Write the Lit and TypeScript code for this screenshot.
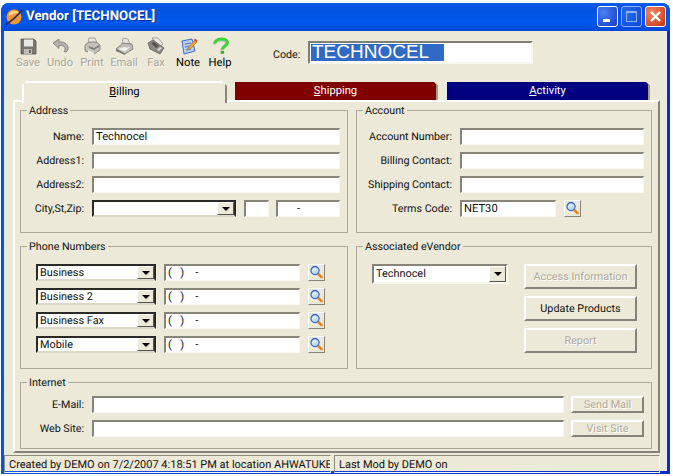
import { LitElement, html, css, svg } from "lit";
import { customElement } from "lit/decorators.js";

const icons: Record<string, unknown> = {
  Save: svg`<path d="M2 2h13l2 2v13H2z" fill="#77776f" stroke="#55554f" stroke-width=".8"/><rect x="5" y="2.500" width="9" height="7" fill="#e8e8e2"/><rect x="5" y="12" width="8" height="5" fill="#bdbdb6"/><rect x="10" y="13" width="2" height="3" fill="#66665f"/>`,
  Undo: svg`<path d="M2 6l6-4v3c5-.5 8 1.500 9 5 .5 2-.5 4-2 5l-2-.5c1.500-1.500 1.500-3.500 0-5-1.200-1-3-1.300-5-1v3z" fill="#b3b3ac" stroke="#777770" stroke-width=".8"/>`,
  Print: svg`<path d="M6 1h6l2 5H5z" fill="#e8e8e2" stroke="#88887f" stroke-width=".7"/><path d="M2 8l4-3h7l4 3v5l-6 4-9-3z" fill="#c2c2ba" stroke="#77776f" stroke-width=".8"/><path d="M6 11l5 2 5-3v-2l-5 3-5-2z" fill="#7f7f78"/><path d="M5 13l6 3 0 2-6-2z" fill="#eeeee8"/>`,
  Email: svg`<path d="M8 1l5 1 2 5-8 0z" fill="#e6e6e0" stroke="#8a8a82" stroke-width=".7"/><path d="M1 12l7-6 9 1 1 5-8 5z" fill="#bdbdb5" stroke="#77776f" stroke-width=".8"/><path d="M3 12l6-2 6 .5-5 4z" fill="#f0f0ea"/><path d="M1 12l9 5v1l-9-4z" fill="#6f6f68"/>`,
  Fax: svg`<path d="M5 1h6l5 6-4 3z" fill="#ecece6" stroke="#88887f" stroke-width=".7"/><path d="M1 6l5-3 11 8-4 6-10-5z" fill="#8c8c85" stroke="#5f5f58" stroke-width=".8"/><path d="M4 6l3-1 5 4-3 2z" fill="#55554f"/><path d="M10 13l3-3 2 1-3 3z" fill="#d8d8d0"/>`,
  Note: svg`<path d="M3 4l10-2 3 12-11 3z" fill="#b6cdf2" stroke="#3f6cc4" stroke-width="1"/><path d="M6 7l6-1M6 10l6-1M7 13l5-1" stroke="#3f6cc4" stroke-width=".9"/><path d="M9 11l7-8 2 2-7 7-3 1z" fill="#f2a530" stroke="#c26a14" stroke-width=".7"/><path d="M15 3l1-1.500 2.500 2L17 5z" fill="#e0433a"/>`,
  Help: svg`<path d="M4 6.500C4.500 1 16.500.5 16.500 5.500c0 3.500-5 3.500-5 7" fill="none" stroke="#9a9a90" stroke-width="3" opacity=".5" transform="translate(-1 1)"/><path d="M4 6.500C4.500 1 16.500.5 16.500 5.500c0 3.500-5 3.500-5 7" fill="none" stroke="#3fd23f" stroke-width="3"/><rect x="9.700" y="14" width="3.400" height="2.800" fill="#2eb52e"/>`,
};

const lens = html`<svg width="15" height="15" viewBox="0 0 15 15"><path d="M8.500 8.500l4 3.500" stroke="#e08a2c" stroke-width="2.800" stroke-linecap="round"/><circle cx="6" cy="5.500" r="4" fill="#c6def8" stroke="#3f66c4" stroke-width="1.300"/><path d="M3.800 6c0-1.300 1-2.500 2.300-2.500" stroke="#fff" fill="none"/></svg>`;

@customElement("app-root")
export class AppRoot extends LitElement {
  static styles = css`
    :host { display: block; width: 673px; height: 476px; background: #fff; overflow: hidden;
      font: 11.2px Roboto, "Liberation Sans", Arial, sans-serif; color: #111; text-rendering: geometricPrecision; }
    * { box-sizing: border-box; }
    .window { margin: 3px 3px 2px 1px; width: 669px; height: 471px; display: flex; flex-direction: column;
      border-radius: 8px 8px 0 0; overflow: hidden; background: linear-gradient(90deg, #0855dd, #0a3fd8 50%, #0a2fc0); }
    .title { height: 28px; flex: none; display: flex; align-items: center; padding: 0 4px 1px 4px;
      background: linear-gradient(#0a5fe8 0, #0a55e6 8%, #0054e3 30%, #0058ee 70%, #0347d6 100%); color: #fff; }
    .title b { font: bold 13.300px Roboto, sans-serif; margin-left: 3px; text-shadow: 1px 1px 0 #0a2b9a; flex: 1; }
    .wbtns { display: flex; gap: 3px; }
    .wbtn { width: 21px; height: 21px; border: 1px solid #fff; border-radius: 3px; display: flex; align-items: center; justify-content: center;
      background: radial-gradient(circle at 30% 30%, #4a7ff0, #2450d8 70%, #1c3fbe); }
    .wbtn.off { opacity: .55; }
    .wbtn.close { background: radial-gradient(circle at 30% 30%, #ee8a66, #d9502c 65%, #b93414); }
    .client { flex: 1; margin: 0 3px 3px 3px; background: #ece9d8; display: flex; flex-direction: column; min-height: 0; }
    .toolbar { height: 50px; flex: none; display: flex; padding: 6px 0 0 8px; line-height: 13px; }
    .tool { width: 32px; display: flex; flex-direction: column; align-items: center; color: #a9a698; text-shadow: 1px 1px 0 #f8f7f0; }
    .tool.on { color: #000; text-shadow: none; }
    .tool svg { display: block; margin-bottom: 0; }
    .code { display: flex; align-items: flex-start; margin-left: 37px; padding-top: 4px; gap: 8px; }
    .code > span { padding-top: 7px; width: 27px; white-space: nowrap; font-size: 10.700px; }
    .code-box { width: 225px; height: 23px; background: #fff; padding: 1px; border: 2px solid; border-color: #807e72 #f7f6ef #f7f6ef #807e72; display: flex; font: 19px/17px "Liberation Sans", sans-serif; }
    .code-box span { background: #316ac5; color: #fff; width: 133px; padding-left: 1px; height: 17px; }
    .tabs { display: flex; height: 19px; flex: none; padding-left: 18px; gap: 8px; align-items: flex-start; }
    .tab { height: 18px; margin-top: 1px; width: 203px; color: #fff; text-align: center; line-height: 17px; border-right: 2px solid #a09d8e;
      clip-path: polygon(0 0, calc(100% - 4px) 0, 100% 4px, 100% 100%, 0 100%); }
    .tab.act { background: #ece9d8; color: #000; width: 205px; height: 22px; margin-top: 0; line-height: 18px; position: relative; z-index: 1;
      border-top: 2px solid #fff; border-left: 2px solid #fff; border-right: 2px solid #8a8878;
      clip-path: polygon(4px 0, calc(100% - 5px) 0, 100% 5px, 100% 100%, 0 100%, 0 4px); }
    .tab.red { background: #800000; }
    .tab.blue { background: #000080; margin-left: 1px; }
    .page { margin: 0 7px 0 9px; height: 353px; flex: none; border: 2px solid; border-color: #fff #86847a #86847a #fff; padding: 2px 6px 0 5px;
      display: grid; grid-template-columns: 328px 296px; column-gap: 8px; row-gap: 7px; grid-template-rows: 129px 129px 73px; }
    fieldset { margin: 0; min-width: 0; border: 1px solid #aaa798; padding: 11px 7px 0 0; }
    legend { margin-left: 6px; padding: 0 2px; line-height: 13px; height: 13px; font-size: 10.700px; }
    .wide { grid-column: 1 / 3; padding-top: 7px; }
    .rows { display: flex; flex-direction: column; gap: 7px; }
    .row { display: flex; align-items: stretch; height: 17px; gap: 8px; }
    .row.tight { gap: 7px; }
    .lab { text-align: right; line-height: 17px; padding-right: 1px; white-space: nowrap; font-size: 10.700px; }
    .a .lab { width: 64px; } .b .lab { width: 96px; }
    .field { background: #fff; height: 17px; border: solid; border-width: 2px 1px 1px 2px; border-color: #87857a #f7f6ef #f7f6ef #87857a; line-height: 13px; padding-left: 2px; white-space: pre; overflow: hidden; flex: none; }
    .w248 { width: 248px; } .w184 { width: 184px; } .w136 { width: 136px; } .w96 { width: 96px; } .w472 { width: 472px; }
    .state { width: 25px; margin-left: 1px; } .zip { width: 64px; padding-left: 19px; }
    .combo { display: flex; justify-content: space-between; background: #fff; height: 17px; border: 2px solid; border-color: #2a2a26 #2a2a26 #ddd9c8 #2a2a26; line-height: 13px; padding-left: 2px; flex: none; font-size: 10.900px; }
    .c120 { width: 120px; } .c144 { width: 144px; }
    .arrow { width: 17px; background: #ece9d8; border-style: solid; border-width: 1px; border-color: #fff #55544c #55544c #fff; display: flex; align-items: center; justify-content: center; flex: none; }
    .arrow i { border: 4px solid transparent; border-top: 4px solid #000; border-bottom: 0; }
    .find { width: 17px; height: 17px; flex: none; background: #ece9d8; border: 1px solid; border-color: #fff #86847a #86847a #fff; display: flex; align-items: center; justify-content: center; }
    .find.shift { margin-left: 1px; }
    .phones { padding-left: 15px; }
    .assoc { display: flex; padding-left: 15px; }
    .combo.tall { width: 136px; height: 20px; line-height: 15px; border-color: #87857a #f7f6ef #f7f6ef #87857a; background: #fff; }
    .btns { display: flex; flex-direction: column; gap: 7px; margin-left: 16px; width: 113px; }
    .btn { height: 25px; background: #ece9d8; border: 2px solid; border-color: #fff #86847a #86847a #fff; text-align: center; line-height: 22px; flex: none; font-size: 10.800px; }
    .btn.off { color: #aca899; text-shadow: 1px 1px 0 #fff; }
    .btn.small { height: 17px; width: 73px; line-height: 14px; }
    .status { flex: 1; margin-top: 2px; display: flex; gap: 3px; line-height: 14px; font-size: 11px; }
    .cell { border: 1px solid; border-color: #8e8c7f #f7f6ef #f7f6ef #8e8c7f; padding: 2px 0 0 4px; white-space: nowrap; overflow: hidden; }
    .c1 { width: 327px; } .c2 { width: 326px; }
  `;

  private tool(n: string, on = false) {
    return html`<div class="tool ${on ? "on" : ""}"><svg width="19" height="19" viewBox="0 0 19 19">${icons[n]}</svg>${n}</div>`;
  }
  private find() { return html`<div class="find">${lens}</div>`; }
  private phone(t: string) {
    return html`<div class="row"><div class="combo c120"><span>${t}</span><div class="arrow"><i></i></div></div>
      <div class="field w136">${"(   )    -"}</div>${this.find()}</div>`;
  }

  render() {
    return html`<div class="window">
      <div class="title">
        <svg width="18" height="18" viewBox="0 0 18 18"><circle cx="9" cy="9" r="7.500" fill="#f0963a"/><path d="M4 6c2-4 7-4 10-1-4 0-7 1-10 3z" fill="#fbd48e"/><path d="M.5 16.500C5 14 13 7 17.500 1.500" stroke="#2c2c50" stroke-width="1.600" fill="none"/></svg>
        <b>Vendor [TECHNOCEL]</b>
        <div class="wbtns">
          <div class="wbtn"><svg width="13" height="13"><rect x="2" y="9" width="7" height="3" fill="#fff"/></svg></div>
          <div class="wbtn off"><svg width="13" height="13"><rect x="1.500" y="1.500" width="10" height="10" fill="none" stroke="#fff"/><rect x="1" y="1" width="11" height="2" fill="#fff"/></svg></div>
          <div class="wbtn close"><svg width="15" height="15"><path d="M3 3l9 9M12 3l-9 9" stroke="#fff" stroke-width="2.400"/></svg></div>
        </div>
      </div>
      <div class="client">
        <div class="toolbar">
          ${this.tool("Save")}${this.tool("Undo")}${this.tool("Print")}${this.tool("Email")}${this.tool("Fax")}${this.tool("Note", true)}${this.tool("Help", true)}
          <div class="code"><span>Code:</span><div class="code-box"><span>TECHNOCEL</span></div></div>
        </div>
        <div class="tabs">
          <div class="tab act"><u>B</u>illing</div>
          <div class="tab red"><u>S</u>hipping</div>
          <div class="tab blue"><u>A</u>ctivity</div>
        </div>
        <div class="page">
          <fieldset class="a"><legend>Address</legend><div class="rows">
            <div class="row tight"><span class="lab">Name:</span><div class="field w248">Technocel</div></div>
            <div class="row tight"><span class="lab">Address1:</span><div class="field w248"></div></div>
            <div class="row tight"><span class="lab">Address2:</span><div class="field w248"></div></div>
            <div class="row tight"><span class="lab">City,St,Zip:</span>
              <div class="combo c144"><span></span><div class="arrow"><i></i></div></div>
              <div class="field state"></div>
              <div class="field zip">-</div></div>
          </div></fieldset>
          <fieldset class="b"><legend>Account</legend><div class="rows">
            <div class="row tight"><span class="lab">Account Number:</span><div class="field w184"></div></div>
            <div class="row tight"><span class="lab">Billing Contact:</span><div class="field w184"></div></div>
            <div class="row tight"><span class="lab">Shipping Contact:</span><div class="field w184"></div></div>
            <div class="row tight"><span class="lab">Terms Code:</span><div class="field w96">NET30</div><div class="find shift">${lens}</div></div>
          </div></fieldset>
          <fieldset><legend>Phone Numbers</legend><div class="rows phones">
            ${this.phone("Business")}${this.phone("Business 2")}${this.phone("Business Fax")}${this.phone("Mobile")}
          </div></fieldset>
          <fieldset><legend>Associated eVendor</legend><div class="assoc">
            <div class="combo tall"><span>Technocel</span><div class="arrow"><i></i></div></div>
            <div class="btns"><div class="btn off">Access Information</div><div class="btn">Update Products</div><div class="btn off">Report</div></div>
          </div></fieldset>
          <fieldset class="a wide"><legend>Internet</legend><div class="rows">
            <div class="row tight"><span class="lab">E-Mail:</span><div class="field w472"></div><div class="btn off small">Send Mail</div></div>
            <div class="row tight"><span class="lab">Web Site:</span><div class="field w472"></div><div class="btn off small">Visit Site</div></div>
          </div></fieldset>
        </div>
        <div class="status">
          <div class="cell c1">Created by DEMO on 7/2/2007 4:18:51 PM at location AHWATUKE</div>
          <div class="cell c2">Last Mod by DEMO on</div>
        </div>
      </div>
    </div>`;
  }
}
